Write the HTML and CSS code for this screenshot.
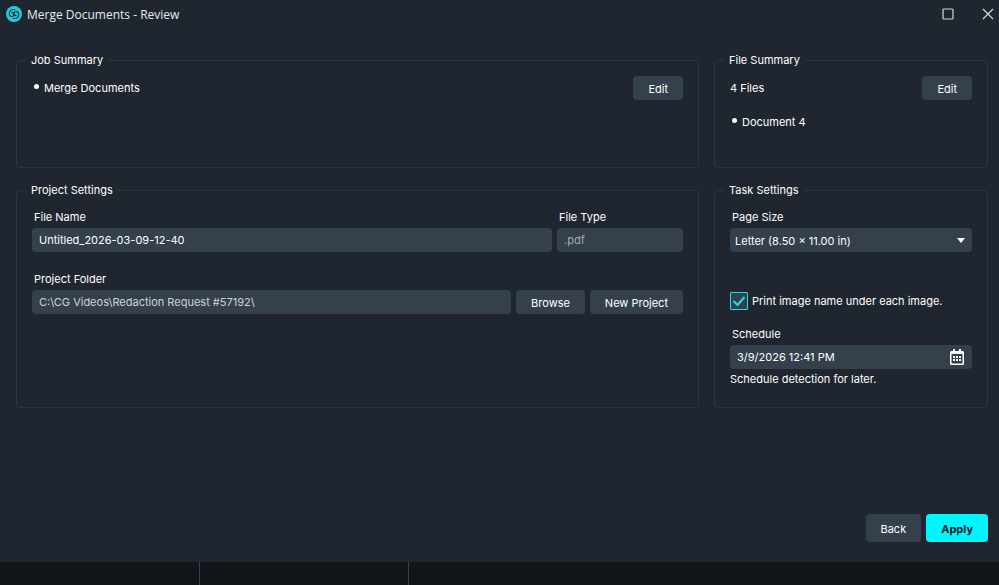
FILE: index.html
```
<!DOCTYPE html>
<html lang="en">
<head>
    <meta charset="UTF-8">
    <meta name="viewport" content="width=device-width, initial-scale=1.0">
    <title>Merge Documents - Review</title>
    <link rel="stylesheet" href="styles.css">
</head>
<body>
    <div class="window">
        <header class="title-bar">
            <svg class="logo" viewBox="0 0 16 16" width="16" height="16" aria-hidden="true">
                <circle cx="8" cy="8" r="8" fill="#19cfdc"/>
                <g fill="none" stroke="#16323d" stroke-width="1.2" stroke-linecap="round">
                    <path d="M8.600 3.600C5.400 3 3.300 5 3.300 7.500c0 2 1.300 3.100 2.600 3 1.800-.1 2.900-2 1.900-3.700-.5-.7-1.500-.6-1.900.200"/>
                    <path d="M7.400 12.400c3.200.6 5.300-1.400 5.300-3.900 0-2-1.300-3.100-2.600-3-1.800.1-2.900 2-1.900 3.700.5.7 1.500.6 1.900-.2"/>
                </g>
            </svg>
            <h1 class="title">Merge Documents - Review</h1>
            <button class="window-button" type="button" aria-label="Maximize">
                <svg viewBox="0 0 12 12" width="12" height="12">
                    <rect x="1" y="1" width="10" height="10" rx="1" fill="none" stroke="#d5d8db" stroke-width="1.2"/>
                </svg>
            </button>
            <button class="window-button" type="button" aria-label="Close">
                <svg viewBox="0 0 12 12" width="12" height="12">
                    <path d="M1 1l10 10M11 1L1 11" fill="none" stroke="#d5d8db" stroke-width="1.2"/>
                </svg>
            </button>
        </header>

        <main class="panels">
            <fieldset class="panel">
                <legend>Job Summary</legend>
                <div class="summary-row">
                    <ul class="item-list">
                        <li>Merge Documents</li>
                    </ul>
                    <button class="btn" type="button">Edit</button>
                </div>
            </fieldset>

            <fieldset class="panel">
                <legend>File Summary</legend>
                <div class="summary-row">
                    <span class="file-count">4 Files</span>
                    <button class="btn" type="button">Edit</button>
                </div>
                <ul class="item-list file-list">
                    <li>Document 4</li>
                </ul>
            </fieldset>

            <fieldset class="panel">
                <legend>Project Settings</legend>
                <div class="field-row">
                    <div class="field field-grow">
                        <label for="file-name">File Name</label>
                        <input class="control" id="file-name" type="text" value="Untitled_2026-03-09-12-40">
                    </div>
                    <div class="field field-type">
                        <label for="file-type">File Type</label>
                        <input class="control" id="file-type" type="text" value=".pdf" disabled>
                    </div>
                </div>
                <div class="field-row">
                    <div class="field field-grow">
                        <label for="project-folder">Project Folder</label>
                        <input class="control control-readonly" id="project-folder" type="text" value="C:\CG Videos\Redaction Request #57192\" readonly>
                    </div>
                    <button class="btn" type="button">Browse</button>
                    <button class="btn" type="button">New Project</button>
                </div>
            </fieldset>

            <fieldset class="panel">
                <legend>Task Settings</legend>
                <div class="field">
                    <label for="page-size">Page Size</label>
                    <select class="control" id="page-size">
                        <option>Letter (8.50 × 11.00 in)</option>
                    </select>
                </div>
                <div class="check-row">
                    <input class="checkbox" id="print-name" type="checkbox" checked>
                    <label for="print-name">Print image name under each image.</label>
                </div>
                <div class="field">
                    <label for="schedule">Schedule</label>
                    <div class="date-box">
                        <input class="control" id="schedule" type="text" value="3/9/2026 12:41 PM">
                        <button class="date-button" type="button" aria-label="Open calendar">
                            <svg viewBox="0 0 14 16" width="14" height="16">
                                <path d="M3 0h2v2h4V0h2v2h1.500A1.500 1.500 0 0 1 14 3.500v11a1.500 1.500 0 0 1-1.500 1.500h-11A1.500 1.500 0 0 1 0 14.500v-11A1.500 1.500 0 0 1 1.500 2H3zM1.500 5v9.500h11V5z" fill="#fff" fill-rule="evenodd"/>
                                <path d="M3 7h2v2H3zM6 7h2v2H6zM9 7h2v2H9zM3 10h2v2H3zM6 10h2v2H6zM9 10h2v2H9z" fill="#fff"/>
                            </svg>
                        </button>
                    </div>
                </div>
                <p class="hint">Schedule detection for later.</p>
            </fieldset>
        </main>

        <footer class="actions">
            <button class="btn btn-large" type="button">Back</button>
            <button class="btn btn-large btn-primary" type="button">Apply</button>
        </footer>
    </div>

    <div class="status-strip">
        <div class="status-cell"></div>
        <div class="status-cell status-cell-wide"></div>
    </div>
</body>
</html>
```
FILE: styles.css
```
* {
    box-sizing: border-box;
}

body {
    margin: 0;
    min-height: 100vh;
    display: flex;
    flex-direction: column;
    background-color: #111418;
    color: #fff;
    font-family: Inter, "Liberation Sans", sans-serif;
    font-size: 11px;
    font-weight: 400;
    line-height: 16px;
}

button, input, select {
    font: inherit;
    color: inherit;
}

.window {
    flex: 1;
    display: flex;
    flex-direction: column;
    background-color: #20262f;
}

/* Title bar */
.title-bar {
    display: flex;
    align-items: center;
    height: 28px;
    padding-left: 6px;
}

.title {
    flex: 1;
    margin: 0 0 0 5px;
    padding-top: 2px;
    font-family: "Open Sans", "Noto Sans", sans-serif;
    font-size: 12px;
    font-weight: 400;
    color: #e8eaec;
}

.window-button {
    display: flex;
    justify-content: center;
    width: 40px;
    padding: 0;
    border: none;
    background: none;
}

.window-button:last-child {
    width: 22px;
    margin-left: 9px;
}

/* Panels */
.panels {
    display: grid;
    grid-template-columns: 1fr 274px;
    grid-template-rows: minmax(116px, auto) minmax(226px, auto);
    gap: 14px 15px;
    padding: 24px 11px 0 16px;
}

.panel {
    min-width: 0;
    margin: 0;
    padding: 8px 15px;
    border: 1px solid #2d343f;
    border-radius: 4px;
}

.panel legend {
    margin-left: -6px;
    padding: 0 5px;
}

.summary-row {
    display: flex;
    justify-content: space-between;
    align-items: center;
}

.item-list {
    margin: 0;
    padding: 0;
    list-style: none;
}

.item-list li {
    display: flex;
    gap: 5px;
    padding-left: 2px;
}

.item-list li::before {
    content: "";
    width: 5px;
    height: 5px;
    margin-top: 4px;
    border-radius: 50%;
    background-color: #fff;
}

.file-list {
    margin-top: 14px;
}

/* Form fields */
.field-row {
    display: flex;
    align-items: flex-end;
    gap: 5px;
}

.field-row + .field-row {
    margin-top: 16px;
}

.field {
    display: flex;
    flex-direction: column;
}

.field-grow {
    flex: 1;
}

.field-type {
    width: 126px;
}

.field label {
    padding-left: 2px;
    line-height: 22px;
}

.control {
    width: 100%;
    height: 24px;
    padding: 0 7px;
    border: none;
    border-radius: 4px;
    background-color: #35404d;
}

.control:disabled {
    color: #a3a9b0;
}

.control-readonly {
    color: #ced2d6;
}

select.control {
    appearance: none;
    padding: 1px 5px 0;
    background-image: url("data:image/svg+xml,%3Csvg xmlns='http://www.w3.org/2000/svg' viewBox='0 0 8 5'%3E%3Cpath d='M0 0h8L4 5z' fill='white'/%3E%3C/svg%3E");
    background-repeat: no-repeat;
    background-position: right 7px center;
    background-size: 8px 5px;
}

.check-row {
    display: flex;
    align-items: center;
    gap: 4px;
    margin: 40px 0 13px;
}

.checkbox {
    appearance: none;
    width: 18px;
    height: 18px;
    margin: 0;
    border: 1px solid #22dbe8;
    border-radius: 1px;
    background-color: #35404d;
}

.checkbox:checked {
    background-image: url("data:image/svg+xml,%3Csvg xmlns='http://www.w3.org/2000/svg' viewBox='0 0 16 16'%3E%3Cpath d='M2.500 8l4 4L13.500 4' fill='none' stroke='%2322dbe8' stroke-width='2'/%3E%3C/svg%3E");
}

.date-box {
    display: flex;
    border-radius: 4px;
    background-color: #35404d;
}

.date-box .control {
    flex: 1;
    min-width: 0;
    background: none;
}

.date-button {
    display: flex;
    align-items: center;
    padding: 0 8px;
    border: none;
    background: none;
}

.hint {
    margin: 2px 0 0;
}

/* Buttons */
.btn {
    height: 24px;
    padding: 2px 15px 0;
    border: none;
    border-radius: 4px;
    background-color: #35404d;
}

.btn:hover {
    background-color: #404d5c;
}

.btn-large {
    height: 28px;
}

.btn-primary {
    background-color: #00f6ff;
    color: #10151b;
    font-weight: 700;
}

.btn-primary:hover {
    background-color: #5cf9ff;
}

.actions {
    display: flex;
    justify-content: flex-end;
    gap: 5px;
    margin-top: auto;
    padding: 20px 11px;
}

/* Strip under the window */
.status-strip {
    display: flex;
    height: 23px;
}

.status-cell {
    width: 200px;
    border-right: 1px solid #3a4049;
}

.status-cell-wide {
    width: 209px;
}
```
